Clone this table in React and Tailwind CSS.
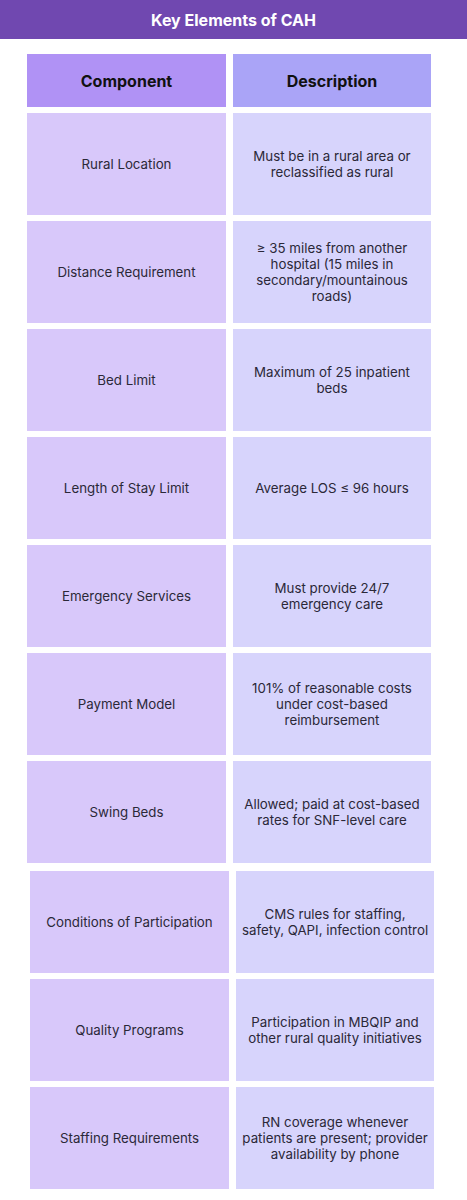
import React from "react";

const rows = [
  ["Rural Location", "Must be in a rural area or reclassified as rural"],
  ["Distance Requirement", "≥ 35 miles from another hospital (15 miles in secondary/mountainous roads)"],
  ["Bed Limit", "Maximum of 25 inpatient beds"],
  ["Length of Stay Limit", "Average LOS ≤ 96 hours"],
  ["Emergency Services", "Must provide 24/7 emergency care"],
  ["Payment Model", "101% of reasonable costs under cost-based reimbursement"],
  ["Swing Beds", "Allowed; paid at cost-based rates for SNF-level care"],
];

const rows2 = [
  ["Conditions of Participation", "CMS rules for staffing,\nsafety, QAPI, infection control", true],
  ["Quality Programs", "Participation in MBQIP and other rural quality initiatives"],
  ["Staffing Requirements", "RN coverage whenever patients are present; provider availability by phone"],
];

function Row({ a, b, tight }) {
  return (
    <div className="grid grid-cols-[199px_198px] gap-x-[7px] h-[102px] text-[13.3px] leading-[16px] text-[#2b2838]">
      <div className="bg-[#d8c8fa] flex items-center justify-center text-center px-2">{a}</div>
      <div
        className={
          tight
            ? "bg-[#d7d4fc] flex items-center justify-center text-center px-[1px] whitespace-pre-line"
            : "bg-[#d7d4fc] flex items-center justify-center text-center px-[6px]"
        }
      >
        {b}
      </div>
    </div>
  );
}

export default function App() {
  return (
    <div className="w-[467px] h-[1200px] bg-white" style={{ fontFamily: "Inter, 'Liberation Sans', sans-serif" }}>
      <div className="h-[39px] bg-[#7048b0] flex items-center justify-center text-white font-bold text-[16px]">
        Key Elements of CAH
      </div>
      <div className="pt-[15px] pl-[27px] flex flex-col gap-[6px]">
        <div className="grid grid-cols-[199px_198px] gap-x-[7px] h-[53px] text-[16px] font-bold text-[#111]">
          <div className="bg-[#b092f5] flex items-center justify-center">Component</div>
          <div className="bg-[#aaa4f7] flex items-center justify-center">Description</div>
        </div>
        {rows.map(([a, b]) => (
          <Row key={a} a={a} b={b} />
        ))}
        <div className="ml-[3px] mt-[2px] flex flex-col gap-[6px]">
          {rows2.map(([a, b, t]) => (
            <Row key={a} a={a} b={b} tight={t} />
          ))}
        </div>
      </div>
    </div>
  );
}
